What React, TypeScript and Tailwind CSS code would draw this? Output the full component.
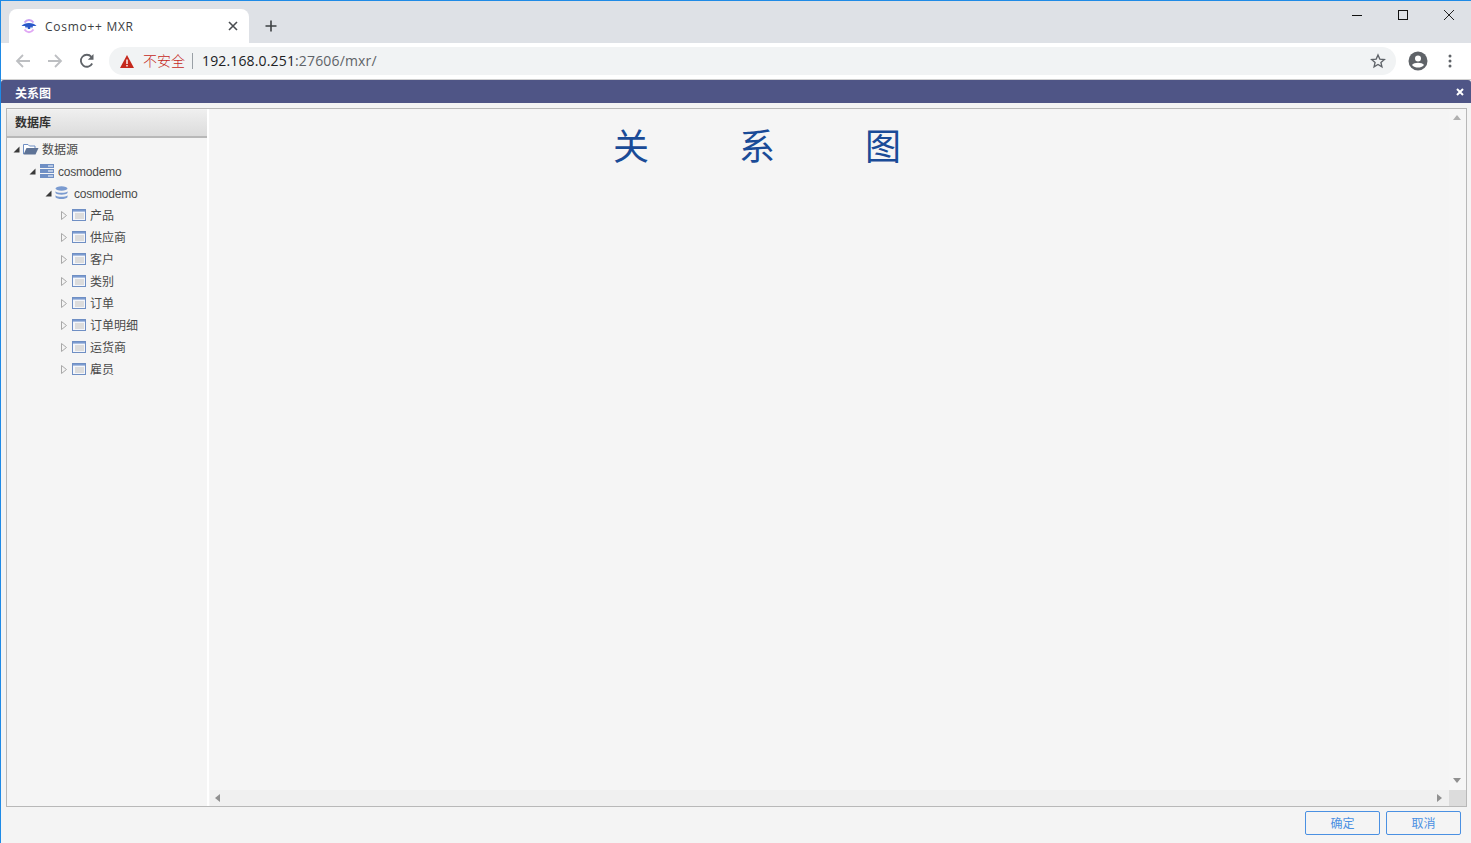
import React from "react";

const trees = ["产品", "供应商", "客户", "类别", "订单", "订单明细", "运货商", "雇员"];

function Caret({ open }: { open?: boolean }) {
  return open ? (
    <svg width="7" height="7" viewBox="0 0 7 7" className="shrink-0"><path d="M6.5 0.5V6.5H0.5Z" fill="#3a3a3a" /></svg>
  ) : (
    <svg width="6" height="9" viewBox="0 0 6 9" className="shrink-0"><path d="M0.5 0.5L5.5 4.5L0.5 8.5Z" fill="#f4f4f4" stroke="#a8a8a8" /></svg>
  );
}

function TableIcon() {
  return (
    <svg width="14" height="12" viewBox="0 0 14 12" className="block shrink-0">
      <rect x="0.5" y="0.5" width="13" height="11" fill="#f4f6fa" stroke="#6f8fc4" />
      <rect x="1" y="1" width="12" height="1.6" fill="#7b9bd0" />
      <rect x="3" y="4" width="9" height="6" fill="#dcdcdc" />
    </svg>
  );
}

function Row({ indent, children }: { indent: string; children: React.ReactNode }) {
  return <div className={`flex h-[22px] items-center [&>svg]:mb-[2px] ${indent}`}>{children}</div>;
}

export default function App() {
  return (
    <div className="flex h-[843px] w-[1471px] flex-col overflow-hidden border-l border-t border-[#1e8ae6] bg-[#f4f4f4] font-['Liberation_Sans','Noto_Sans_CJK_SC',sans-serif]">
      {/* tab strip */}
      <div className="flex h-[42px] shrink-0 items-end bg-[#dee1e6] pl-2">
        <div className="flex h-[34px] w-[240px] items-center rounded-t-lg bg-white pl-[12px] pr-[11px]">
          <svg width="16" height="16" viewBox="0 0 16 16" className="shrink-0">
            <path d="M3.5 4.5C6 1 10 1 12.5 4.5" fill="none" stroke="#c9a0f0" strokeWidth="2" />
            <path d="M3.5 11.5C6 15 10 15 12.5 11.5" fill="none" stroke="#e0a8f4" strokeWidth="2" />
            <path d="M0.5 8C3.5 4 12.5 4 15.5 8L12 8L11 10.5L10 8.5L9 11H7L6 8.5L5 10.5L4 8Z" fill="#2a58c8" />
          </svg>
          <span className="ml-[8px] flex-1 pt-[1px] font-['Open_Sans','Noto_Sans',sans-serif] text-[12px] tracking-[0.72px] text-[#3c4043]">Cosmo++ MXR</span>
          <svg width="10" height="10" viewBox="0 0 10 10" className="shrink-0"><path d="M1 1L9 9M9 1L1 9" stroke="#4a4d51" strokeWidth="1.6" /></svg>
        </div>
        <div className="ml-[16px] flex h-[34px] items-center">
          <svg width="12" height="12" viewBox="0 0 12 12"><path d="M6 0.5V11.5M0.5 6H11.5" stroke="#3c4043" strokeWidth="1.6" /></svg>
        </div>
        <div className="ml-auto mr-[-1px] flex h-[42px] self-start">
          <div className="flex h-[28px] w-[46px] items-center justify-center">
            <svg width="10" height="10" viewBox="0 0 10 10"><path d="M0 5.5H10" stroke="#111" /></svg>
          </div>
          <div className="flex h-[28px] w-[46px] items-center justify-center">
            <svg width="10" height="10" viewBox="0 0 10 10"><rect x="0.5" y="0.5" width="9" height="9" fill="none" stroke="#111" /></svg>
          </div>
          <div className="flex h-[28px] w-[46px] items-center justify-center">
            <svg width="10" height="10" viewBox="0 0 10 10"><path d="M0 0L10 10M10 0L0 10" stroke="#222" /></svg>
          </div>
        </div>
      </div>

      {/* toolbar */}
      <div className="flex h-[36px] shrink-0 items-center bg-white">
        <svg width="16" height="16" viewBox="0 0 16 16" className="ml-[14px]"><path d="M15 8H2M8 2L2 8L8 14" fill="none" stroke="#bdbfc2" strokeWidth="1.8" /></svg>
        <svg width="16" height="16" viewBox="0 0 16 16" className="ml-[16px]"><path d="M1 8H14M8 2L14 8L8 14" fill="none" stroke="#bdbfc2" strokeWidth="1.8" /></svg>
        <svg width="16" height="16" viewBox="0 0 16 16" className="ml-[16px]"><path d="M13.2 10.5A6 6 0 1 1 12.4 3.8" fill="none" stroke="#5f6368" strokeWidth="1.8" /><path d="M14.5 1V6.8H8.8Z" fill="#5f6368" /></svg>
        <div className="ml-[14px] flex h-[28px] w-[1287px] items-center rounded-full bg-[#f1f3f4] pl-[11px] pr-[10px]">
          <svg width="14" height="13" viewBox="0 0 14 13" className="shrink-0"><path d="M7 0L14 13H0Z" fill="#c5281c" /><path d="M6.3 4.5H7.7V9H6.3ZM6.3 10H7.7V11.5H6.3Z" fill="#fff" /></svg>
          <span className="ml-[9px] text-[14px] font-light text-[#c5281c]">不安全</span>
          <span className="ml-[7px] h-[16px] w-px bg-[#9aa0a6]"></span>
          <span className="ml-[9px] pb-[2px] font-['Open_Sans','Noto_Sans',sans-serif] text-[14px] tracking-[0.15px] text-[#202124]">192.168.0.251<span className="text-[#5f6368]">:27606/mxr/</span></span>
          <svg width="16" height="16" viewBox="0 0 24 24" className="ml-auto"><path d="M12 3L14.7 9.2L21.5 9.8L16.4 14.2L17.9 20.8L12 17.3L6.1 20.8L7.6 14.2L2.5 9.8L9.3 9.2Z" fill="none" stroke="#5f6368" strokeWidth="2" /></svg>
        </div>
        <svg width="20" height="20" viewBox="0 0 20 20" className="ml-[12px]">
          <circle cx="10" cy="10" r="9.5" fill="#5f6368" />
          <circle cx="10" cy="7.5" r="3" fill="#fff" />
          <path d="M4 14C6 11 14 11 16 14C14.5 16 12 16.5 10 16.5C8 16.5 5.5 16 4 14Z" fill="#fff" />
        </svg>
        <svg width="4" height="14" viewBox="0 0 4 14" className="ml-[20px]"><circle cx="2" cy="2" r="1.5" fill="#5f6368" /><circle cx="2" cy="7" r="1.5" fill="#5f6368" /><circle cx="2" cy="12" r="1.5" fill="#5f6368" /></svg>
      </div>

      {/* dialog */}
      <div className="flex min-h-0 flex-1 flex-col border-t border-[#d0d0d0] bg-[#f4f4f4]">
        <div className="flex h-[23px] shrink-0 items-center rounded-t-[3px] bg-[#4f5586] pl-[14px] pr-[7px]">
          <span className="pt-[5px] text-[12px] font-bold text-white">关系图</span>
          <svg width="8" height="8" viewBox="0 0 8 8" className="ml-auto"><path d="M1 1L7 7M7 1L1 7" stroke="#fff" strokeWidth="2" /></svg>
        </div>

        <div className="mx-[5px] mt-[5px] flex h-[699px] w-[1461px] shrink-0 border border-[#b8b8b8] bg-[#f5f5f5]">
          <div className="flex w-[200px] shrink-0 flex-col pt-px">
            <div className="flex h-[28px] shrink-0 items-center border-b-2 border-[#b8b8b8] bg-gradient-to-b from-[#efefef] to-[#dcdcdc] pl-[8px] text-[12px] font-bold text-[#333]">数据库</div>
            <div className="pt-[1px] text-[12px] text-[#4a4a4a]">
              <Row indent="pl-[6px]">
                <Caret open />
                <svg width="16" height="12" viewBox="0 0 16 12" className="ml-[3px] shrink-0"><path d="M0.5 11V1.5H5L6.5 3H12V5" fill="#fff" stroke="#6f8fc4" /><path d="M0.5 11.5L3.5 5H15.5L12.5 11.5Z" fill="#5e7396" /></svg>
                <span className="ml-[3px]">数据源</span>
              </Row>
              <Row indent="pl-[22px]">
                <Caret open />
                <svg width="14" height="14" viewBox="0 0 14 14" className="ml-[4px] shrink-0"><rect width="14" height="4" fill="#6f8fc4" /><rect y="5" width="14" height="4" fill="#6f8fc4" /><rect y="10" width="14" height="4" fill="#6f8fc4" /><rect x="8" y="1.5" width="5" height="1" fill="#fff" /><rect x="8" y="6.5" width="5" height="1" fill="#fff" /><rect x="8" y="11.5" width="5" height="1" fill="#fff" /></svg>
                <span className="ml-[4px] tracking-[-0.2px]">cosmodemo</span>
              </Row>
              <Row indent="pl-[38px]">
                <Caret open />
                <svg width="13" height="14" viewBox="0 0 13 14" className="ml-[3px] shrink-0"><ellipse cx="6.5" cy="2.5" rx="6" ry="2.2" fill="#7b9bd0" /><path d="M0.5 5.2C2 7.4 11 7.4 12.5 5.2V7C11 9.2 2 9.2 0.5 7Z" fill="#7b9bd0" /><path d="M0.5 9.2C2 11.4 11 11.4 12.5 9.2V11.2C11 13.6 2 13.6 0.5 11.2Z" fill="#7b9bd0" /></svg>
                <span className="ml-[6px] tracking-[-0.2px]">cosmodemo</span>
              </Row>
              {trees.map((t) => (
                <Row key={t} indent="pl-[54px]">
                  <Caret />
                  <span className="mb-[2px] ml-[5px]"><TableIcon /></span>
                  <span className="ml-[4px]">{t}</span>
                </Row>
              ))}
            </div>
          </div>
          <div className="w-[2px] shrink-0 bg-white"></div>
          <div className="flex min-w-0 flex-1 flex-col pl-px">
            <div className="flex min-h-0 flex-1">
              <div className="flex flex-1 justify-center gap-[90px] pt-[14px] pr-[145px] text-[36px] leading-[50px] text-[#1a4b97]">
                <span>关</span><span>系</span><span>图</span>
              </div>
              <div className="flex w-[17px] shrink-0 flex-col items-center justify-between bg-[#f6f6f6] pb-[7px] pt-[6px] pr-[2px]">
                <svg width="8" height="5" viewBox="0 0 8 5"><path d="M4 0L8 5H0Z" fill="#b0b0b0" /></svg>
                <svg width="8" height="5" viewBox="0 0 8 5"><path d="M4 5L8 0H0Z" fill="#909090" /></svg>
              </div>
            </div>
            <div className="flex h-[16px] shrink-0">
              <div className="flex flex-1 items-center justify-between bg-[#f0f0f0] pl-[5px] pr-[7px]">
                <svg width="5" height="8" viewBox="0 0 5 8"><path d="M0 4L5 0V8Z" fill="#909090" /></svg>
                <svg width="5" height="8" viewBox="0 0 5 8"><path d="M5 4L0 0V8Z" fill="#909090" /></svg>
              </div>
              <div className="w-[17px] bg-[#dcdcdc]"></div>
            </div>
          </div>
        </div>

        <div className="flex justify-end gap-[6px] pr-[10px] pt-[4px]">
          <button className="h-[24px] w-[75px] rounded-[2px] border border-[#4a90e2] pt-[2px] text-[12px] text-[#4a90e2]">确定</button>
          <button className="h-[24px] w-[75px] rounded-[2px] border border-[#4a90e2] pt-[2px] text-[12px] text-[#4a90e2]">取消</button>
        </div>
      </div>
    </div>
  );
}
